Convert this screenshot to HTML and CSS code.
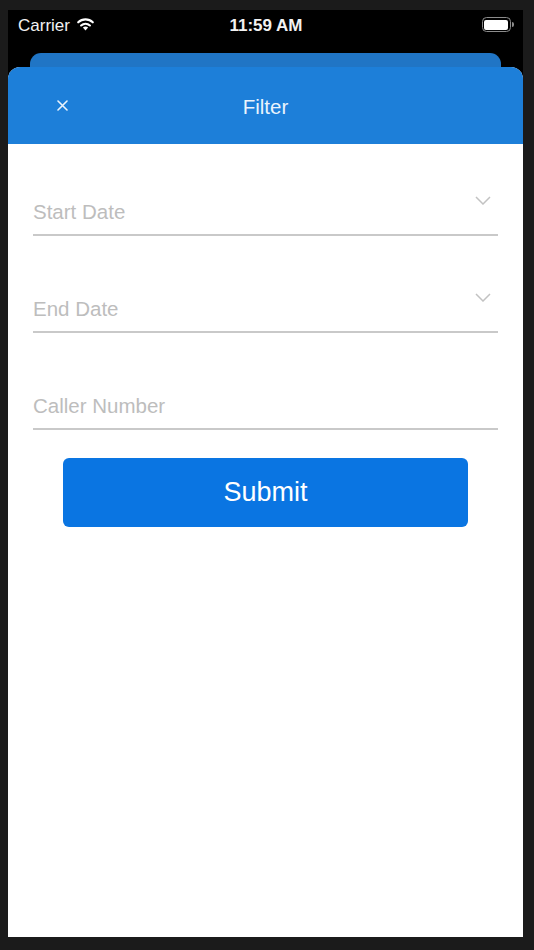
FILE: index.html
```html
<!DOCTYPE html>
<html>
<head>
<meta charset="utf-8">
<link rel="stylesheet" href="styles.css">
</head>
<body>
<div class="device">
  <div class="statusbar">
    <div class="sb-left">
      <span class="carrier">Carrier</span>
      <svg class="wifi" width="19" height="14" viewBox="0 0 19 14">
        <path d="M9.5 13.6 L6.9 10.6 A4 4 0 0 1 12.1 10.6 Z" fill="#fff"/>
        <path d="M5.1 8.5 A6.6 6.6 0 0 1 13.9 8.5" stroke="#fff" stroke-width="2.1" fill="none" stroke-linecap="round"/>
        <path d="M2.2 5.3 A10.6 10.6 0 0 1 16.8 5.3" stroke="#fff" stroke-width="2.1" fill="none" stroke-linecap="round"/>
      </svg>
    </div>
    <span class="time">11:59 AM</span>
    <div class="sb-right">
      <div class="battery"><div class="battery-level"></div></div>
      <div class="battery-nub"></div>
    </div>
  </div>
  <div class="back-sheet"></div>
  <div class="sheet">
    <div class="header">
      <svg class="close" width="11" height="11" viewBox="0 0 11 11">
        <path d="M1 1 L10 10 M10 1 L1 10" stroke="#eaf3fc" stroke-width="1.6" stroke-linecap="round"/>
      </svg>
      <span class="title">Filter</span>
    </div>
    <div class="form">
      <div class="field">
        <span class="placeholder">Start Date</span>
        <svg class="chevron" width="16" height="9" viewBox="0 0 16 9"><path d="M1 1 L8 8 L15 1" stroke="#c2c2c2" stroke-width="1.5" fill="none"/></svg>
      </div>
      <div class="field">
        <span class="placeholder">End Date</span>
        <svg class="chevron" width="16" height="9" viewBox="0 0 16 9"><path d="M1 1 L8 8 L15 1" stroke="#c2c2c2" stroke-width="1.5" fill="none"/></svg>
      </div>
      <div class="field">
        <span class="placeholder">Caller Number</span>
      </div>
      <button class="submit">Submit</button>
    </div>
  </div>
</div>
</body>
</html>
```

FILE: styles.css
```css
html, body {
  margin: 0;
  padding: 0;
  background: #1b1b1b;
  font-family: "Liberation Sans", Arial, sans-serif;
}
.device {
  margin: 10px 0 0 8px;
  width: 515px;
  height: 927px;
  background: #000;
  display: flex;
  flex-direction: column;
  overflow: hidden;
}
.statusbar {
  height: 43px;
  flex: none;
  display: flex;
  align-items: center;
  justify-content: space-between;
  padding: 0 9px 12px 10px;
  box-sizing: border-box;
  color: #f2f2f2;
}
.sb-left {
  display: flex;
  align-items: center;
  gap: 6px;
  width: 120px;
}
.carrier {
  font-size: 17px;
}
.wifi {
  margin-top: -3px;
}
.time {
  font-size: 17px;
  font-weight: bold;
}
.sb-right {
  width: 120px;
  display: flex;
  justify-content: flex-end;
  align-items: center;
  padding-bottom: 2px;
}
.battery {
  width: 29px;
  height: 15px;
  border: 1.5px solid #8c8c8c;
  border-radius: 4.5px;
  box-sizing: border-box;
  padding: 1.5px;
}
.battery-level {
  width: 100%;
  height: 100%;
  background: #fff;
  border-radius: 2px;
}
.battery-nub {
  width: 2px;
  height: 5px;
  background: #8c8c8c;
  border-radius: 0 2px 2px 0;
  margin-left: 1px;
}
.back-sheet {
  flex: none;
  height: 26px;
  margin: 0 22px;
  background: #2075c5;
  border-radius: 11px 11px 0 0;
}
.sheet {
  position: relative;
  flex: 1;
  margin-top: -12px;
  background: #fff;
  border-radius: 12px 12px 0 0;
  overflow: hidden;
  display: flex;
  flex-direction: column;
}
.header {
  flex: none;
  height: 77px;
  background: #1d7fd9;
  display: flex;
  align-items: center;
  justify-content: center;
  position: relative;
}
.close {
  position: absolute;
  left: 49px;
  top: 33px;
}
.title {
  color: #eaf4fd;
  font-size: 20.5px;
  padding-top: 2px;
}
.form {
  padding: 31px 25px 0 25px;
  display: flex;
  flex-direction: column;
  gap: 36px;
}
.field {
  height: 61px;
  box-sizing: border-box;
  border-bottom: 2px solid #c9c9c9;
  display: flex;
  justify-content: space-between;
  padding-bottom: 11px;
}
.placeholder {
  align-self: flex-end;
  font-size: 20.5px;
  line-height: 23px;
  color: #bdbdbd;
}
.chevron {
  align-self: flex-start;
  margin-top: 21px;
  margin-right: 7px;
}
.submit {
  margin: -8px 30px 0 30px;
  height: 69px;
  border: none;
  border-radius: 6px;
  background: #0a75e2;
  color: #fff;
  font-family: "Liberation Sans", Arial, sans-serif;
  font-size: 27px;
  padding: 0;
}
```
